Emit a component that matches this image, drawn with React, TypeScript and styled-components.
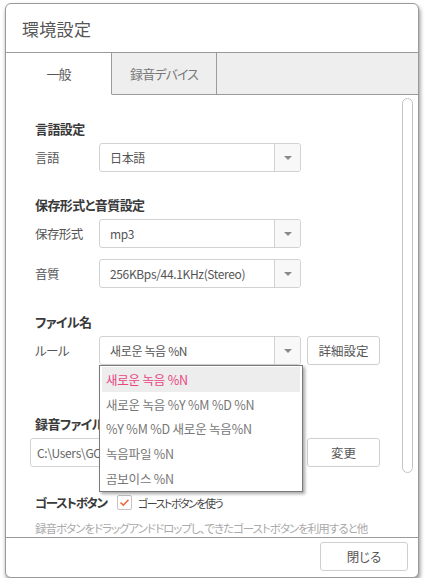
import React from "react";
import styled, { createGlobalStyle } from "styled-components";

const Global = createGlobalStyle`
  html, body { margin: 0; padding: 0; background: #ffffff; }
  body {
    font-family: "Noto Sans CJK JP", "Noto Sans", sans-serif;
    font-feature-settings: "palt";
    color: #555;
  }
  * { box-sizing: border-box; }
`;

const Dialog = styled.div`
  position: relative;
  margin: 3px 0 0 5px;
  width: 414px;
  height: 575px;
  border: 1px solid #9a9a9a;
  border-radius: 6px;
  background: #fff;
  box-shadow: 1px 3px 4px rgba(0, 0, 0, 0.45);
  display: flex;
  flex-direction: column;
`;

const Header = styled.div`
  height: 49px;
  display: flex;
  align-items: center;
  padding-left: 16px;
  border-bottom: 1px solid #9a9a9a;
  flex: none;
`;

const Title = styled.div`
  font-size: 17px;
  color: #555;
  letter-spacing: 0.3px;
`;

const Tabs = styled.div`
  display: flex;
  height: 42px;
  flex: none;
  background: #eeeeee;
`;

const Tab = styled.div<{ $active?: boolean }>`
  width: ${(p) => (p.$active ? 106 : 105)}px;
  display: flex;
  align-items: center;
  justify-content: center;
  font-size: 13px;
  letter-spacing: -0.9px;
  color: ${(p) => (p.$active ? "#555" : "#777")};
  background: ${(p) => (p.$active ? "#fff" : "#eeeeee")};
  border-right: 1px solid #9a9a9a;
  border-bottom: ${(p) => (p.$active ? "1px solid transparent" : "1px solid #9a9a9a")};
`;

const TabFiller = styled.div`
  flex: 1;
  border-bottom: 1px solid #9a9a9a;
`;

const Body = styled.div`
  height: 442px;
  display: flex;
  overflow: hidden;
  flex: none;
`;

const Content = styled.div`
  flex: 1;
  padding: 25px 0 0 24px;
  display: flex;
  flex-direction: column;
`;

const SectionTitle = styled.div<{ $top?: number }>`
  font-size: 13px;
  line-height: 18px;
  font-weight: 600;
  color: #3a3a3a;
  padding-left: 5px;
  white-space: nowrap;
  letter-spacing: -0.6px;
  margin-top: ${(p) => p.$top ?? 0}px;
  margin-bottom: 5px;
`;

const Row = styled.div<{ $gap?: number }>`
  display: flex;
  align-items: center;
  margin-bottom: ${(p) => p.$gap ?? 0}px;
`;

const Label = styled.div`
  width: 69px;
  padding-left: 5px;
  font-size: 12.5px;
  letter-spacing: -0.6px;
  color: #555;
  flex: none;
`;

const SelectBox = styled.div`
  position: relative;
  width: 202px;
  height: 29px;
  border: 1px solid #d2d2d2;
  border-radius: 3px;
  display: flex;
  flex: none;
`;

const SelectValue = styled.div`
  flex: 1;
  display: flex;
  align-items: center;
  padding-left: 10px;
  font-size: 12px;
  letter-spacing: -0.35px;
  color: #555;
  white-space: nowrap;
  overflow: hidden;
`;

const SelectArrow = styled.div`
  width: 26px;
  border-left: 1px solid #d2d2d2;
  background: #f8f8f8;
  border-radius: 0 3px 3px 0;
  display: flex;
  align-items: center;
  justify-content: center;
`;

const Caret = styled.div`
  width: 0;
  height: 0;
  border-left: 4px solid transparent;
  border-right: 4px solid transparent;
  border-top: 4px solid #8a8a8a;
  margin-top: 1px;
`;

const Button = styled.div<{ $w?: number }>`
  width: ${(p) => p.$w ?? 73}px;
  height: 29px;
  border: 1px solid #cfcfcf;
  border-radius: 3px;
  display: flex;
  align-items: center;
  justify-content: center;
  font-size: 12.5px;
  color: #555;
  background: #fff;
  flex: none;
`;

const ButtonSlot = styled.div`
  margin-left: 6px;
`;

const Menu = styled.div`
  position: absolute;
  top: 28px;
  left: -1px;
  width: 204px;
  height: 127px;
  border: 1px solid #7a7a7a;
  background: #fff;
  box-shadow: 2px 2px 3px rgba(0, 0, 0, 0.35);
  padding: 1px 2px;
  z-index: 5;
`;

const MenuItem = styled.div<{ $active?: boolean }>`
  height: 24.75px;
  display: flex;
  align-items: center;
  padding-left: 4px;
  font-family: "Noto Sans CJK KR", "Noto Sans CJK JP", sans-serif;
  font-size: 12.5px;
  letter-spacing: -0.2px;
  color: ${(p) => (p.$active ? "#ea4583" : "#777")};
  background: ${(p) => (p.$active ? "#ededed" : "transparent")};
  white-space: nowrap;
`;

const PathField = styled.div`
  width: 271px;
  height: 29px;
  border: 1px solid #d2d2d2;
  border-radius: 3px;
  display: flex;
  align-items: center;
  padding-left: 6px;
  font-size: 12px;
  letter-spacing: -0.3px;
  color: #666;
  white-space: nowrap;
  overflow: hidden;
  flex: none;
`;

const GhostRow = styled.div`
  display: flex;
  align-items: center;
  margin-top: 26px;
`;

const GhostLabel = styled.div`
  width: 87px;
  padding-left: 5px;
  font-size: 12.5px;
  font-weight: 600;
  color: #3a3a3a;
  white-space: nowrap;
  letter-spacing: -1.4px;
  flex: none;
`;

const Check = styled.div`
  width: 15px;
  height: 15px;
  border: 1px solid #c4c4c4;
  border-radius: 2px;
  display: flex;
  align-items: center;
  justify-content: center;
  flex: none;
`;

const CheckText = styled.div`
  margin-left: 6px;
  font-size: 11px;
  letter-spacing: -1.5px;
  color: #444;
  white-space: nowrap;
`;

const Description = styled.div`
  margin-top: 8px;
  padding-left: 5px;
  font-size: 11.5px;
  letter-spacing: -1px;
  color: #aaa;
  white-space: nowrap;
`;

const ScrollCol = styled.div`
  width: 19px;
  padding: 3px 5px 0 3px;
  flex: none;
`;

const Thumb = styled.div`
  width: 11px;
  height: 375px;
  border: 1px solid #c4c4c4;
  border-radius: 6px;
  background: #fff;
`;

const Footer = styled.div`
  flex: 1;
  border-top: 1px solid #9a9a9a;
  display: flex;
  justify-content: flex-end;
  align-items: flex-start;
  padding: 4px 10px 0 0;
`;

function Select({ value, children }: { value: string; children?: React.ReactNode }) {
  return (
    <SelectBox>
      <SelectValue>{value}</SelectValue>
      <SelectArrow>
        <Caret />
      </SelectArrow>
      {children}
    </SelectBox>
  );
}

const ruleOptions = [
  "새로운 녹음 %N",
  "새로운 녹음 %Y %M %D %N",
  "%Y %M %D 새로운 녹음%N",
  "녹음파일 %N",
  "곰보이스 %N",
];

export default function App() {
  return (
    <>
      <Global />
      <Dialog>
        <Header>
          <Title>環境設定</Title>
        </Header>
        <Tabs>
          <Tab $active>一般</Tab>
          <Tab>録音デバイス</Tab>
          <TabFiller />
        </Tabs>
        <Body>
          <Content>
            <SectionTitle>言語設定</SectionTitle>
            <Row>
              <Label>言語</Label>
              <Select value="日本語" />
            </Row>

            <SectionTitle $top={24}>保存形式と音質設定</SectionTitle>
            <Row $gap={11}>
              <Label>保存形式</Label>
              <Select value="mp3" />
            </Row>
            <Row>
              <Label>音質</Label>
              <Select value="256KBps/44.1KHz(Stereo)" />
            </Row>

            <SectionTitle $top={25}>ファイル名</SectionTitle>
            <Row>
              <Label>ルール</Label>
              <Select value="새로운 녹음 %N">
                <Menu>
                  {ruleOptions.map((o, i) => (
                    <MenuItem key={o} $active={i === 0}>
                      {o}
                    </MenuItem>
                  ))}
                </Menu>
              </Select>
              <ButtonSlot>
                <Button>詳細設定</Button>
              </ButtonSlot>
            </Row>

            <SectionTitle $top={50}>録音ファイルの保存先</SectionTitle>
            <Row>
              <PathField>C:\Users\GOM\Documents\GOM Voice</PathField>
              <ButtonSlot>
                <Button>変更</Button>
              </ButtonSlot>
            </Row>

            <GhostRow>
              <GhostLabel>ゴーストボタン</GhostLabel>
              <Check>
                <svg width="11" height="9" viewBox="0 0 11 9">
                  <path d="M1.5 4.5 L4.3 7.2 L9.5 1.8" fill="none" stroke="#f0643c" strokeWidth="1.6" />
                </svg>
              </Check>
              <CheckText>ゴーストボタンを使う</CheckText>
            </GhostRow>
            <Description>録音ボタンをドラッグアンドドロップし、できたゴーストボタンを利用すると他</Description>
          </Content>
          <ScrollCol>
            <Thumb />
          </ScrollCol>
        </Body>
        <Footer>
          <Button $w={88}>閉じる</Button>
        </Footer>
      </Dialog>
    </>
  );
}
